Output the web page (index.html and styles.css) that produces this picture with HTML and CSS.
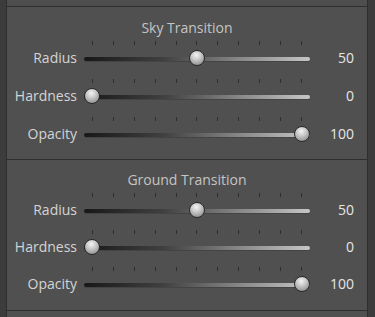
FILE: index.html
```html
<!DOCTYPE html>
<html lang="en">
<head>
    <meta charset="UTF-8">
    <meta name="viewport" content="width=device-width, initial-scale=1.0">
    <title>Transitions</title>
    <link rel="stylesheet" href="styles.css">
</head>
<body>
    <div class="panel">
        <div class="section">
            <div class="section-title">Sky Transition</div>
            <div class="row">
                <span class="label">Radius</span>
                <div class="slider" style="--v:0.5">
                    <div class="ticks"><i></i><i></i><i></i><i></i><i></i><i></i><i></i><i></i><i></i><i></i><i></i></div>
                    <div class="track"></div>
                    <div class="thumb"></div>
                </div>
                <span class="value">50</span>
            </div>
            <div class="row">
                <span class="label">Hardness</span>
                <div class="slider" style="--v:0">
                    <div class="ticks"><i></i><i></i><i></i><i></i><i></i><i></i><i></i><i></i><i></i><i></i><i></i></div>
                    <div class="track"></div>
                    <div class="thumb"></div>
                </div>
                <span class="value">0</span>
            </div>
            <div class="row">
                <span class="label">Opacity</span>
                <div class="slider" style="--v:1">
                    <div class="ticks"><i></i><i></i><i></i><i></i><i></i><i></i><i></i><i></i><i></i><i></i><i></i></div>
                    <div class="track"></div>
                    <div class="thumb"></div>
                </div>
                <span class="value">100</span>
            </div>
        </div>
        <div class="section compact">
            <div class="section-title">Ground Transition</div>
            <div class="row">
                <span class="label">Radius</span>
                <div class="slider" style="--v:0.5">
                    <div class="ticks"><i></i><i></i><i></i><i></i><i></i><i></i><i></i><i></i><i></i><i></i><i></i></div>
                    <div class="track"></div>
                    <div class="thumb"></div>
                </div>
                <span class="value">50</span>
            </div>
            <div class="row">
                <span class="label">Hardness</span>
                <div class="slider" style="--v:0">
                    <div class="ticks"><i></i><i></i><i></i><i></i><i></i><i></i><i></i><i></i><i></i><i></i><i></i></div>
                    <div class="track"></div>
                    <div class="thumb"></div>
                </div>
                <span class="value">0</span>
            </div>
            <div class="row">
                <span class="label">Opacity</span>
                <div class="slider" style="--v:1">
                    <div class="ticks"><i></i><i></i><i></i><i></i><i></i><i></i><i></i><i></i><i></i><i></i><i></i></div>
                    <div class="track"></div>
                    <div class="thumb"></div>
                </div>
                <span class="value">100</span>
            </div>
        </div>
        <div class="section"></div>
    </div>
</body>
</html>
```

FILE: styles.css
```css
body {
    margin: 0;
    padding: 0;
    background-color: #3c3c3c;
    font-family: "Open Sans", "Noto Sans", sans-serif;
    font-size: 14px;
    height: 317px;
    overflow: hidden;
}
.panel {
    margin-left: 6px;
    width: 360px;
    height: 317px;
    padding-top: 6px;
    background-color: #4e4e4e;
    border-left: 1px solid #2e2e2e;
    border-right: 1px solid #2e2e2e;
}
.section {
    background-color: #505050;
    border-top: 1px solid #2f2f2f;
    padding-bottom: 7px;
}
.section-title {
    text-align: center;
    color: #c4c4c4;
    line-height: 20px;
    padding-top: 11px;
    height: 20px;
}
.row {
    display: flex;
    height: 38px;
}
.compact .section-title {
    padding-top: 10px;
}
.compact .row {
    height: 37px;
}
.compact {
    padding-bottom: 9px;
}
.label {
    width: 70px;
    text-align: right;
    color: #d4d4d4;
    line-height: 20px;
    padding-top: 10px;
}
.slider {
    position: relative;
    width: 226px;
    margin-left: 7px;
}
.ticks {
    display: flex;
    justify-content: space-between;
    padding: 3px 8px 0 8px;
}
.ticks i {
    width: 1px;
    height: 4px;
    background-color: #2e2e2e;
}
.track {
    height: 4px;
    margin-top: 12px;
    border-radius: 2px;
    background: linear-gradient(to right, #181818, #404040 35%, #8a8a8a 70%, #c6c6c6);
    box-shadow: 0 1px 0 #444;
}
.thumb {
    position: absolute;
    top: 12px;
    left: calc(var(--v) * (100% - 16px));
    width: 14px;
    height: 14px;
    border-radius: 50%;
    border: 1px solid #2a2a2a;
    background: radial-gradient(circle at 45% 30%, #f4f4f4, #c6c6c6 40%, #7a7a7a 100%);
}
.value {
    width: 44px;
    text-align: right;
    color: #e6e6e6;
    line-height: 20px;
    padding-top: 10px;
}
```
